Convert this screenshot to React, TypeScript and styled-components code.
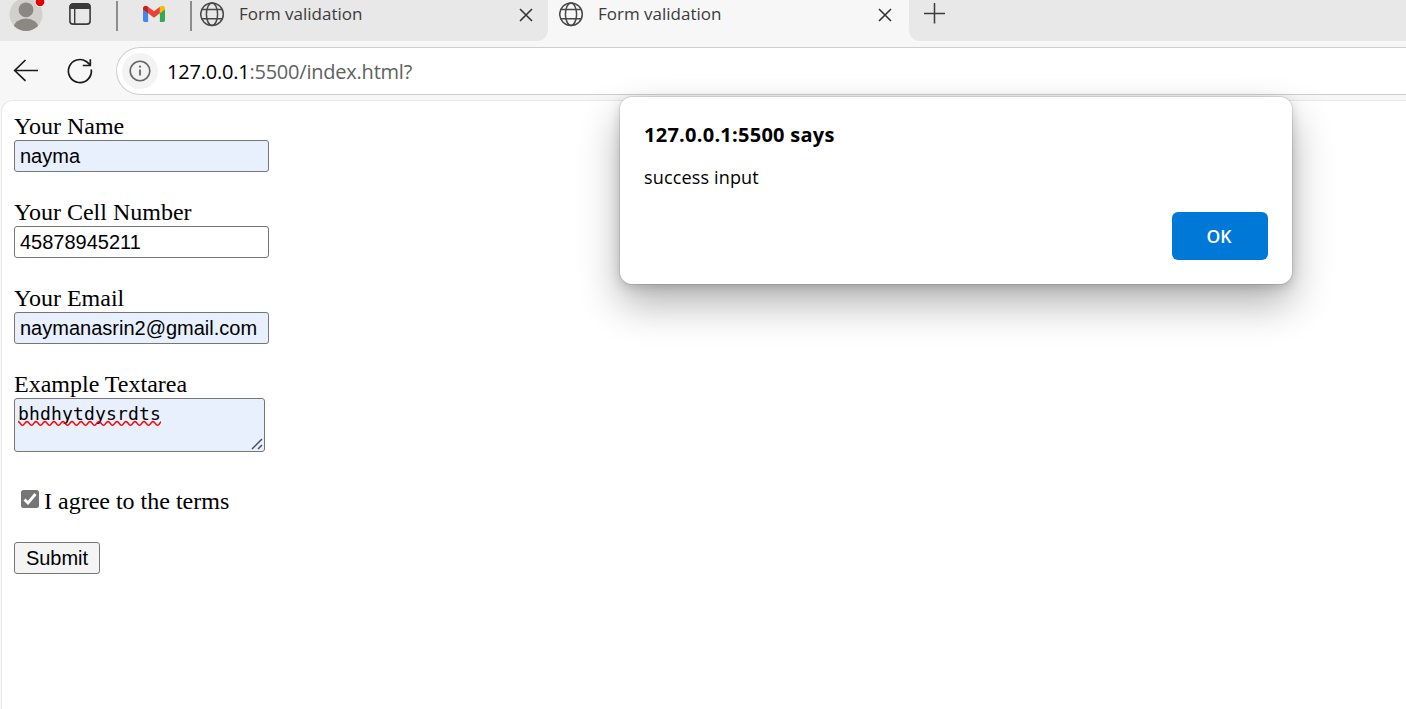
import React from "react";
import styled, { createGlobalStyle } from "styled-components";

const GlobalStyle = createGlobalStyle`
  *, *::before, *::after { box-sizing: border-box; }
  body { margin: 0; background: #f7f7f7; overflow: hidden; }
`;

const ui = `"Open Sans", "Noto Sans", sans-serif`;

const Window = styled.div`
  position: relative;
  display: flex;
  flex-direction: column;
  width: 1406px;
  height: 709px;
  overflow: hidden;
  background: #f7f7f7;
  font-family: ${ui};
`;

const TabStrip = styled.div`
  display: flex;
  height: 41px;
  flex: none;
`;

const StripStart = styled.div`
  display: flex;
  width: 548px;
  background: #e8e8e8;
  border-bottom-right-radius: 11px;
`;

const StripEnd = styled.div`
  flex: 1;
  background: #e8e8e8;
  border-bottom-left-radius: 11px;
  padding-left: 14px;
`;

const PinnedArea = styled.div`
  display: flex;
  width: 192px;
  flex: none;
`;

const Slot = styled.div<{ $w: number }>`
  width: ${(p) => p.$w}px;
  flex: none;
  svg { display: block; }
`;

const Separator = styled.div`
  width: 2px;
  height: 30px;
  margin-top: 1px;
  background: #8c8c8c;
  flex: none;
`;

const Tab = styled.div<{ $w: number; $pad: number }>`
  display: flex;
  width: ${(p) => p.$w}px;
  height: 28px;
  padding-left: ${(p) => p.$pad}px;
  align-items: center;
  svg { display: block; flex: none; }
`;

const TabTitle = styled.span`
  flex: 1;
  margin-left: 14px;
  font-size: 17px;
  line-height: 28px;
  letter-spacing: 0;
  color: #3b3b3b;
  white-space: nowrap;
`;

const CloseSlot = styled.div<{ $w: number }>`
  width: ${(p) => p.$w}px;
  padding-top: 1px;
`;

const Toolbar = styled.div`
  display: flex;
  height: 59px;
  flex: none;
  padding-top: 6px;
`;

const NavButtons = styled.div`
  width: 116px;
  flex: none;
  svg { display: block; }
`;

const AddressBar = styled.div`
  display: flex;
  align-items: center;
  flex: 1;
  height: 48px;
  padding-left: 5px;
  background: #fff;
  border: 1.5px solid #cfcfcf;
  border-right: 0;
  border-radius: 24px 0 0 24px;
`;

const InfoBadge = styled.div`
  width: 36px;
  height: 36px;
  border-radius: 50%;
  background: #f3f3f3;
  flex: none;
  svg { display: block; }
`;

const Url = styled.div`
  margin-left: 9px;
  padding-top: 1px;
  font-size: 20px;
  line-height: 30px;
  letter-spacing: -0.22px;
  color: #616161;
  white-space: nowrap;
  b { font-weight: 400; color: #000; }
`;

const Page = styled.main`
  flex: 1;
  margin-left: 1px;
  padding: 12px 12px 0;
  background: #fff;
  border: 1px solid #e9e9e9;
  border-width: 1px 0 0 1px;
  border-top-left-radius: 12px;
  font-family: "Liberation Serif", serif;
  font-size: 24px;
  line-height: 27px;
  color: #000;
`;

const Field = styled.div`
  margin-bottom: 27px;
`;

const Label = styled.label`
  display: block;
  height: 27px;
`;

const TextInput = styled.input<{ $filled?: boolean }>`
  display: block;
  width: 255px;
  height: 32px;
  margin: 0;
  padding: 1px 5px;
  border: 1px solid #767676;
  border-radius: 3px;
  outline: none;
  background: ${(p) => (p.$filled ? "#e8f0fe" : "#fff")};
  font: 20px "Liberation Sans", sans-serif;
  color: #000;
`;

const TextArea = styled.div`
  position: relative;
  width: 251px;
  height: 54px;
  padding: 3px;
  border: 1px solid #767676;
  border-radius: 3px;
  background: #e8f0fe;
  font: 18px/24px "DejaVu Sans Mono", monospace;
  letter-spacing: 0.17px;
  color: #000;
`;

const Squiggle = styled.svg`
  position: absolute;
  left: 3px;
  top: 20px;
`;

const Grip = styled.svg`
  position: absolute;
  right: 1px;
  bottom: 1px;
`;

const Terms = styled.label`
  display: flex;
  align-items: flex-start;
  padding-left: 7px;
  margin-top: 36px;
  height: 27px;
  svg { display: block; margin-top: 2px; }
  span { margin-left: 5px; }
`;

const Submit = styled.button`
  display: block;
  width: 86px;
  height: 32px;
  margin: 27px 0 0;
  padding: 0;
  border: 1px solid #767676;
  border-radius: 3px;
  background: #f4f4f4;
  font: 20px "Liberation Sans", sans-serif;
  color: #000;
`;

const Dialog = styled.div`
  position: absolute;
  left: 620px;
  top: 97px;
  display: flex;
  flex-direction: column;
  width: 672px;
  height: 187px;
  padding: 24px;
  border-radius: 12px;
  background: #fff;
  box-shadow: 0 0 0 1px rgba(0, 0, 0, 0.09), 0 3px 12px rgba(0, 0, 0, 0.17),
    0 20px 40px rgba(0, 0, 0, 0.3);
`;

const DialogTitle = styled.div`
  font-size: 20px;
  font-weight: 700;
  line-height: 28px;
  letter-spacing: 0.26px;
  color: #000;
  white-space: nowrap;
`;

const DialogText = styled.div`
  margin-top: 14px;
  font-size: 18px;
  line-height: 28px;
  letter-spacing: 0.15px;
  color: #000;
  white-space: nowrap;
`;

const OkButton = styled.button`
  align-self: flex-end;
  width: 96px;
  height: 48px;
  margin-top: 21px;
  padding: 0 2px 1px 0;
  border: 0;
  border-radius: 6px;
  background: #0078d7;
  font: 600 17.5px/46px ${ui};
  color: #fff;
`;

const Avatar = () => (
  <svg width="60" height="41" viewBox="0 0 60 41">
    <defs>
      <clipPath id="face"><circle cx="26" cy="14.5" r="16.5" /></clipPath>
    </defs>
    <circle cx="26" cy="14.5" r="16.5" fill="#d2d0cc" />
    <g clipPath="url(#face)" fill="#8b8884">
      <circle cx="26" cy="9.8" r="7.4" />
      <ellipse cx="26" cy="28" rx="12.4" ry="9.4" />
    </g>
    <circle cx="40" cy="1.8" r="5.2" fill="#fff" />
    <circle cx="40" cy="1.8" r="4.4" fill="#e00000" />
  </svg>
);

const WorkspaceIcon = () => (
  <svg width="56" height="41" viewBox="60 0 56 41">
    <rect x="69.9" y="3.9" width="20.2" height="20.2" rx="3.2" fill="none" stroke="#3b3b3b" strokeWidth="1.6" />
    <path d="M69.500 9V7a3.500 3.500 0 0 1 3.500-3.500h14a3.500 3.500 0 0 1 3.500 3.500v2z" fill="#3b3b3b" />
    <path d="M74.700 9v15" stroke="#3b3b3b" strokeWidth="1.400" />
  </svg>
);

const GmailIcon = () => (
  <svg width="72" height="41" viewBox="118 0 72 41">
    <path d="M143 9v11.300c0 .9.700 1.600 1.600 1.600h3.500V11.500z" fill="#4285f4" />
    <path d="M165 9v11.300c0 .9-.7 1.600-1.600 1.600h-3.500V11.500z" fill="#34a853" />
    <path d="M148.100 6.800v6.500l5.900 4.500 5.900-4.500V6.800l-5.900 4.500z" fill="#ea4335" />
    <path d="M143 8v1.500l5.100 3.800V6.800l-.7-.5C145.500 4.800 143 6 143 8z" fill="#c5221f" />
    <path d="M165 8v1.500l-5.100 3.800V6.800l.7-.5C162.500 4.800 165 6 165 8z" fill="#fbbc04" />
  </svg>
);

const Globe = () => (
  <svg width="25" height="25" viewBox="0 0 25 25" fill="none" stroke="#484848" strokeWidth="1.500">
    <circle cx="12" cy="12.200" r="11.300" />
    <ellipse cx="12" cy="12.200" rx="5.600" ry="11.300" />
    <path d="M1.600 7.600h20.800M1.600 16.700h20.800" />
  </svg>
);

const Close = () => (
  <svg width="14" height="14" viewBox="0 0 14 14" stroke="#333" strokeWidth="1.600">
    <path d="M1 1l12 12M13 1l-12 12" />
  </svg>
);

const Plus = () => (
  <svg width="24" height="28" viewBox="0 0 24 28" stroke="#3b3b3b" strokeWidth="1.500">
    <path d="M1 13.500h21M11.500 3v20.500" />
  </svg>
);

const Navigation = () => (
  <svg width="116" height="48" viewBox="0 47 116 48" fill="none" stroke="#1b1b1b" strokeWidth="1.700">
    <path d="M38 70.500H15M25.500 60L14.700 70.500l10.800 10.300" />
    <path d="M91.300 69.500A11.500 11.500 0 1 1 86.600 61.700L90.200 65" />
    <path d="M90.300 59.300v6.200h-7.500" />
  </svg>
);

const InfoIcon = () => (
  <svg width="36" height="36" viewBox="0 0 36 36" fill="none" stroke="#666">
    <circle cx="18" cy="18" r="9.800" strokeWidth="1.600" />
    <path d="M18 16.500v6" strokeWidth="1.800" />
    <circle cx="18" cy="13.700" r="1.100" fill="#666" stroke="none" />
  </svg>
);

const CheckBox = () => (
  <svg width="18" height="18" viewBox="0 0 18 18">
    <rect width="18" height="18" rx="2.500" fill="#767676" />
    <path d="M3.500 9.500l3.500 3.500 7.500-9" fill="none" stroke="#fff" strokeWidth="2.800" />
  </svg>
);

const wave = "M0 2.500" + Array.from({ length: 16 }, () => "c1.800 0 2.700 3.800 4.500 3.800s2.700 -3.800 4.500 -3.800").join("");

export default function App() {
  return (
    <Window>
      <GlobalStyle />
      <TabStrip>
        <StripStart>
          <PinnedArea>
            <Slot $w={60}><Avatar /></Slot>
            <Slot $w={56}><WorkspaceIcon /></Slot>
            <Separator />
            <Slot $w={72}><GmailIcon /></Slot>
            <Separator />
          </PinnedArea>
          <Tab $w={356} $pad={8}>
            <Globe />
            <TabTitle>Form validation</TabTitle>
            <CloseSlot $w={29}><Close /></CloseSlot>
          </Tab>
        </StripStart>
        <Tab $w={361} $pad={11}>
          <Globe />
          <TabTitle>Form validation</TabTitle>
          <CloseSlot $w={31}><Close /></CloseSlot>
        </Tab>
        <StripEnd><Plus /></StripEnd>
      </TabStrip>
      <Toolbar>
        <NavButtons><Navigation /></NavButtons>
        <AddressBar>
          <InfoBadge><InfoIcon /></InfoBadge>
          <Url><b>127.0.0.1</b>:5500/index.html?</Url>
        </AddressBar>
      </Toolbar>
      <Page>
        <Field>
          <Label htmlFor="name">Your Name</Label>
          <TextInput id="name" $filled defaultValue="nayma" />
        </Field>
        <Field>
          <Label htmlFor="cell">Your Cell Number</Label>
          <TextInput id="cell" defaultValue="45878945211" />
        </Field>
        <Field>
          <Label htmlFor="email">Your Email</Label>
          <TextInput id="email" $filled defaultValue="naymanasrin2@gmail.com" />
        </Field>
        <Field>
          <Label>Example Textarea</Label>
          <TextArea>
            bhdhytdysrdts
            <Squiggle width="143" height="8" viewBox="0 0 143 8">
              <path d={wave} fill="none" stroke="#f00" strokeWidth="1.600" />
            </Squiggle>
            <Grip width="12" height="12" viewBox="0 0 12 12" stroke="#4a4f57" strokeWidth="1.500">
              <path d="M1 11L11 1M7 11l4-4" />
            </Grip>
          </TextArea>
        </Field>
        <Terms>
          <CheckBox />
          <span>I agree to the terms</span>
        </Terms>
        <Submit type="button">Submit</Submit>
      </Page>
      <Dialog role="dialog">
        <DialogTitle>127.0.0.1:5500 says</DialogTitle>
        <DialogText>success input</DialogText>
        <OkButton type="button">OK</OkButton>
      </Dialog>
    </Window>
  );
}
